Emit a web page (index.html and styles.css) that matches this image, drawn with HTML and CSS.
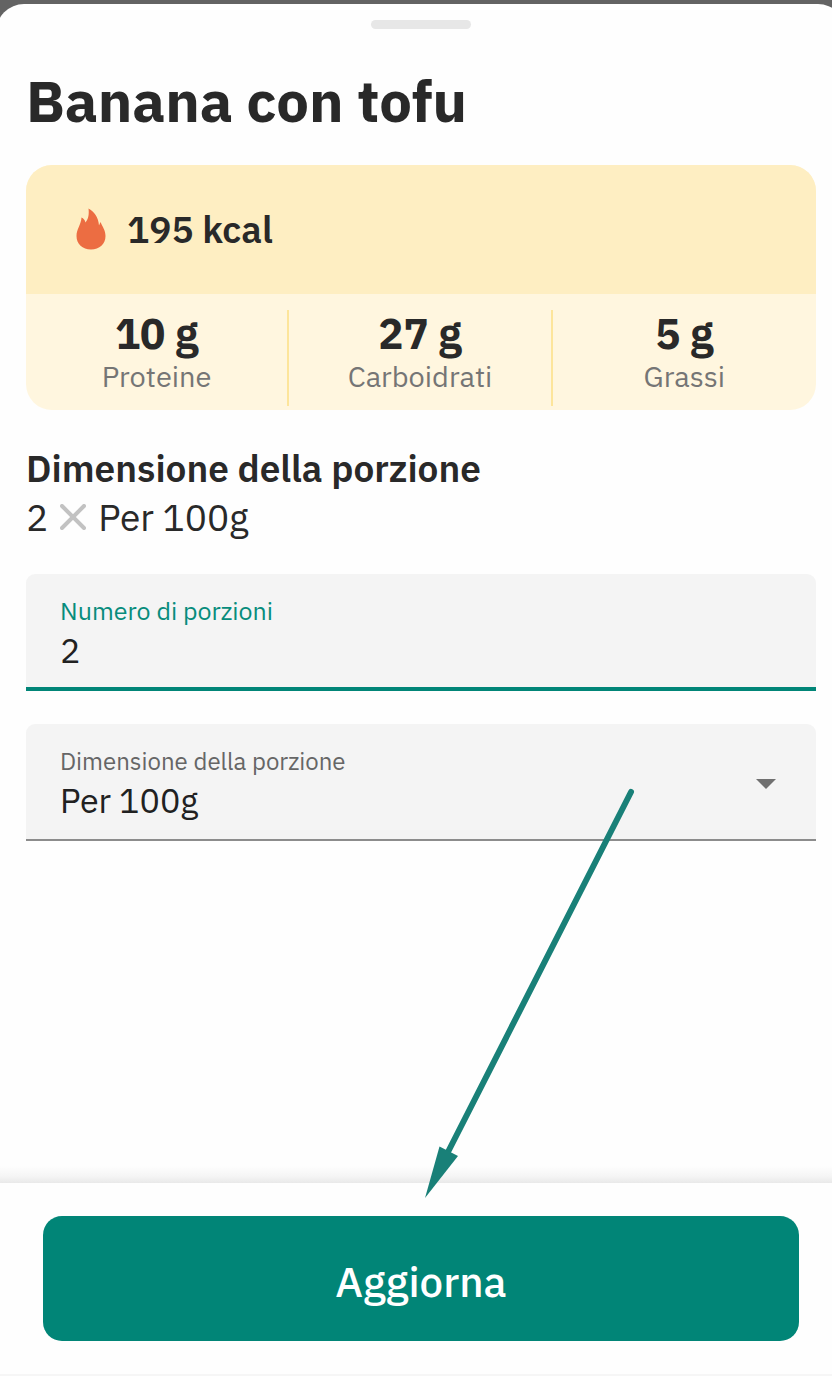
FILE: index.html
```html
<!DOCTYPE html>
<html lang="it">
<head>
<meta charset="utf-8">
<meta name="viewport" content="width=device-width, initial-scale=1">
<title>Banana con tofu</title>
<link rel="stylesheet" href="styles.css">
</head>
<body>
<div class="screen">
  <main class="sheet">
    <div class="handle"></div>
    <div class="content">
      <h1 class="title">Banana con tofu</h1>
      <section class="nutrition">
        <div class="energy">
          <svg class="flame" viewBox="0 0 30 42" aria-hidden="true"><path d="M12.5 0.5C18 3.500 22.500 9 23 17.500L24.500 14C26.500 19 29.500 22 29.500 28C29.500 36 23.500 41.500 15 41.500S0.500 36 0.500 28C0.500 21 5 17 5.500 9.500C7.500 10.500 9 12 9.500 14.500C12.500 11 13.200 6 12.500 0.500Z"/></svg>
          <span>195 kcal</span>
        </div>
        <div class="macros">
          <div class="macro"><strong class="amount">10 g</strong><span class="name">Proteine</span></div>
          <div class="macro"><strong class="amount">27 g</strong><span class="name">Carboidrati</span></div>
          <div class="macro"><strong class="amount">5 g</strong><span class="name">Grassi</span></div>
        </div>
      </section>
      <h2 class="heading">Dimensione della porzione</h2>
      <p class="summary"><span>2</span><svg class="times" viewBox="0 0 26 26" aria-hidden="true"><path d="M2 2L24 24M24 2L2 24"/></svg><span>Per 100g</span></p>
      <form class="fields" id="portion">
        <div class="field active">
          <label for="count">Numero di porzioni</label>
          <input id="count" type="text" inputmode="decimal" value="2">
        </div>
        <div class="field">
          <label for="size">Dimensione della porzione</label>
          <select id="size"><option>Per 100g</option></select>
          <svg class="caret" viewBox="0 0 20 10" aria-hidden="true"><path d="M0 0H20L10 10Z"/></svg>
        </div>
      </form>
    </div>
    <footer class="footer"><button class="update" type="submit" form="portion">Aggiorna</button></footer>
  </main>
  <svg class="pointer" viewBox="0 0 212 412" aria-hidden="true"><path class="shaft" d="M206 4L23 364"/><path class="tip" d="M0 410L14.500 358.500L33 368Z"/></svg>
</div>
</body>
</html>
```
FILE: styles.css
```css
* { box-sizing: border-box; }

body {
  margin: 0;
  background: #636363;
  color: #292929;
  font-family: "IBM Plex Sans", "Noto Sans", sans-serif;
}

.screen {
  position: relative;
  display: flex;
  min-height: 100vh;
  padding-top: 4px;
  overflow: hidden;
}

.sheet {
  display: flex;
  flex: 1;
  flex-direction: column;
  margin: 0 -14px 0 -4px;
  border-radius: 28px 28px 0 0;
  background: #fefefe;
}

.handle {
  width: 100px;
  height: 9px;
  margin: 16px auto 0;
  border-radius: 5px;
  background: #e7e7e7;
}

.content {
  flex: 1;
  padding: 36px 30px 32px;
}

.title {
  margin: 0 0 28px;
  font-size: 58px;
  font-weight: 700;
  line-height: 72px;
}

.nutrition {
  overflow: hidden;
  border-radius: 26px;
  background: #fff6df;
}

.energy {
  display: flex;
  align-items: center;
  gap: 21px;
  height: 129px;
  padding: 0 50px 2px;
  background: #feeec2;
  font-size: 37px;
  font-weight: 600;
}

.flame {
  width: 30px;
  height: 42px;
  fill: #ec6d42;
}

.macros {
  display: grid;
  grid-template-columns: repeat(3, 1fr);
  padding: 16px 0 4px;
}

.macro {
  display: flex;
  flex-direction: column;
  align-items: center;
  height: 96px;
  border-right: 2px solid #fde59b;
}

.macro:last-child { border-right: 0; }

.amount {
  font-size: 42px;
  line-height: 48px;
}

.name {
  color: #757575;
  font-size: 29px;
  line-height: 36px;
}

.heading {
  margin: 34px 0 0;
  font-size: 37px;
  font-weight: 600;
  line-height: 48px;
}

.summary {
  display: flex;
  align-items: center;
  gap: 12px;
  margin: 0 0 32px;
  font-size: 37px;
  line-height: 50px;
}

.times {
  width: 26px;
  height: 26px;
  fill: none;
  stroke: #c2c2c2;
  stroke-width: 4;
  stroke-linecap: round;
}

.fields {
  display: grid;
  gap: 33px;
}

.field {
  position: relative;
  display: flex;
  flex-direction: column;
  min-height: 117px;
  padding: 20px 34px 15px;
  border-bottom: 2px solid #8c8c8c;
  background: linear-gradient(#f4f4f4, #f4f4f4);
  border-radius: 9px 9px 0 0;
}

.field label {
  color: #666;
  font-size: 24px;
  line-height: 34px;
}

.field input,
.field select {
  width: 100%;
  height: 44px;
  padding: 0;
  border: 0;
  outline: 0;
  appearance: none;
  background: transparent;
  color: #212121;
  font: inherit;
  font-size: 34px;
  line-height: 44px;
}

.field.active { border-bottom: 4px solid #018577; }

.field.active label {
  color: #078c7c;
  font-size: 25px;
}

.caret {
  position: absolute;
  top: 55px;
  right: 40px;
  width: 20px;
  height: 10px;
  fill: #707070;
  pointer-events: none;
}

.footer {
  position: relative;
  padding: 33px 47px;
  border-bottom: 2px solid #f6f6f6;
  background: #fefefe;
}

.footer::before {
  content: "";
  position: absolute;
  right: 0;
  bottom: 100%;
  left: 0;
  height: 17px;
  background: linear-gradient(#fefefe, #f5f5f5 60%, #e9e9e9);
}

.update {
  display: block;
  width: 100%;
  height: 125px;
  padding: 6px 0 0;
  border: 0;
  border-radius: 19px;
  background: #018577;
  color: #fff;
  font: inherit;
  font-size: 42px;
  font-weight: 500;
}

.pointer {
  position: absolute;
  top: 788px;
  left: 425px;
  width: 212px;
  height: 412px;
  pointer-events: none;
}

.shaft {
  fill: none;
  stroke: #198078;
  stroke-width: 6;
  stroke-linecap: round;
}

.tip { fill: #198078; }
```
